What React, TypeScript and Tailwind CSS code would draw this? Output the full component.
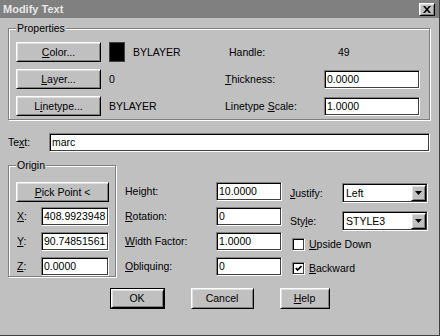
import type { ReactNode } from "react";

// win95 bevels
const raised =
  "border border-t-white border-l-white border-r-black border-b-black shadow-[inset_1px_1px_0_#dfdfdf,inset_-1px_-1px_0_#808080]";
const sunken =
  "border border-t-[#808080] border-l-[#808080] border-r-white border-b-white shadow-[inset_1px_1px_0_#000,inset_-1px_-1px_0_#404040]";

function U({ children }: { children: ReactNode }) {
  return <span className="underline">{children}</span>;
}

function Btn({
  children,
  className = "",
  primary = false,
}: {
  children: ReactNode;
  className?: string;
  primary?: boolean;
}) {
  const face = (
    <div className={`flex h-full w-full items-center justify-center bg-[#c0c0c0] ${raised}`}>
      {children}
    </div>
  );
  return <div className={`${primary ? "border border-black" : ""} ${className}`}>{face}</div>;
}

function Field({ value, className = "" }: { value: string; className?: string }) {
  return (
    <div className={`flex h-[19px] items-center bg-white pl-[2px] ${sunken} ${className}`}>{value}</div>
  );
}

function Combo({ value, className = "" }: { value: string; className?: string }) {
  return (
    <div className={`flex h-[20px] items-center bg-white ${sunken} ${className}`}>
      <span className="flex-1 pl-[3px]">{value}</span>
      <div className={`mr-[1px] flex h-[16px] w-[15px] items-center justify-center bg-[#c0c0c0] ${raised}`}>
        <svg width="7" height="4" viewBox="0 0 7 4">
          <path d="M0 0h7L3.5 4z" fill="#000" />
        </svg>
      </div>
    </div>
  );
}

function Check({ checked = false }: { checked?: boolean }) {
  return (
    <div className={`flex h-[13px] w-[13px] items-center justify-center bg-white ${sunken}`}>
      {checked && (
        <svg width="7" height="7" viewBox="0 0 7 7">
          <path d="M0.8 3 L2.6 5 L6.4 1" stroke="#000" strokeWidth="1.8" fill="none" />
        </svg>
      )}
    </div>
  );
}

function Group({ label, className = "", children }: { label: string; className?: string; children: ReactNode }) {
  return (
    <div className={`relative border border-[#808080] shadow-[1px_1px_0_#fff,inset_1px_1px_0_#fff] ${className}`}>
      <span className="absolute -top-[7px] left-[7px] bg-[#c0c0c0] px-[1px] leading-[13px]">{label}</span>
      {children}
    </div>
  );
}

export default function App() {
  return (
    <div className="flex h-[336px] w-[440px] flex-col border-r border-b border-r-[#404040] border-b-[#404040] bg-[#c0c0c0] font-['Liberation_Sans',Arial,sans-serif] text-[10.5px] leading-[13px] text-black">
      {/* Title bar */}
      <div className="flex h-[18px] items-center justify-between bg-[#808080] pl-[3px] pr-[4px]">
        <span className="text-[11px] font-bold text-[#e6e6e6]">Modify Text</span>
        <div className={`flex h-[13px] w-[16px] items-center justify-center bg-[#c0c0c0] ${raised}`}>
          <svg width="8" height="7" viewBox="0 0 8 7">
            <path d="M0 0h2l2 2.3L6 0h2L5 3.5 8 7H6L4 4.7 2 7H0l3-3.5z" fill="#000" />
          </svg>
        </div>
      </div>

      <div className="flex flex-1 flex-col px-[8px] pt-[10px]">
        {/* Properties */}
        <Group label="Properties" className="h-[92px] w-[422px] pl-[7px] pt-[13px]">
          <div className="flex flex-col gap-[7px]">
            <div className="flex h-[20px] items-center">
              <div className="flex w-[209px] items-center">
                <Btn className="h-[20px] w-[85px]">
                  <U>C</U>olor...
                </Btn>
                <div className="ml-[8px] h-[20px] w-[16px] border border-[#404040] bg-black" />
                <span className="ml-[8px]">BYLAYER</span>
              </div>
              <span className="w-[113px] pl-[4px]">Handle:</span>
              <span>49</span>
            </div>
            <div className="flex h-[20px] items-center">
              <div className="flex w-[209px] items-center">
                <Btn className="h-[20px] w-[85px]">
                  <U>L</U>ayer...
                </Btn>
                <span className="ml-[8px]">0</span>
              </div>
              <span className="w-[99px]">
                <U>T</U>hickness:
              </span>
              <Field value="0.0000" className="w-[96px]" />
            </div>
            <div className="flex h-[20px] items-center">
              <div className="flex w-[209px] items-center">
                <Btn className="h-[20px] w-[85px]">
                  L<U>i</U>netype...
                </Btn>
                <span className="ml-[8px]">BYLAYER</span>
              </div>
              <span className="w-[99px]">
                Linetype <U>S</U>cale:
              </span>
              <Field value="1.0000" className="w-[96px]" />
            </div>
          </div>
        </Group>

        {/* Text */}
        <div className="mt-[13px] flex h-[19px] items-center">
          <span className="w-[41px]">
            Te<U>x</U>t:
          </span>
          <Field value="marc" className="w-[381px]" />
        </div>

        <div className="mt-[13px] flex">
          {/* Origin */}
          <Group label="Origin" className="h-[112px] w-[108px] pl-[7px] pt-[16px]">
            <Btn className="h-[20px] w-[93px]">
              <U>P</U>ick Point &lt;
            </Btn>
            <div className="mt-[5px] flex flex-col gap-[6px]">
              {[
                ["X", "408.9923948"],
                ["Y", "90.74851561"],
                ["Z", "0.0000"],
              ].map(([k, v]) => (
                <div key={k} className="flex items-center">
                  <span className="w-[25px] pl-[1px]">
                    <U>{k}</U>:
                  </span>
                  <Field value={v} className="w-[68px]" />
                </div>
              ))}
            </div>
          </Group>

          {/* Sizes */}
          <div className="ml-[9px] mt-[17px] flex flex-col gap-[6px]">
            <div className="flex items-center">
              <span className="w-[91px]">Height:</span>
              <Field value="10.0000" className="w-[66px]" />
            </div>
            <div className="flex items-center">
              <span className="w-[91px]">
                <U>R</U>otation:
              </span>
              <Field value="0" className="w-[66px]" />
            </div>
            <div className="flex items-center">
              <span className="w-[91px]">
                <U>W</U>idth Factor:
              </span>
              <Field value="1.0000" className="w-[66px]" />
            </div>
            <div className="flex items-center">
              <span className="w-[91px]">
                <U>O</U>bliquing:
              </span>
              <Field value="0" className="w-[66px]" />
            </div>
          </div>

          {/* Justify / style */}
          <div className="ml-[8px] mt-[18px] flex flex-col">
            <div className="flex items-center">
              <span className="w-[52px]">
                <U>J</U>ustify:
              </span>
              <Combo value="Left" className="w-[86px]" />
            </div>
            <div className="mt-[8px] flex items-center">
              <span className="w-[52px]">
                Sty<U>l</U>e:
              </span>
              <Combo value="STYLE3" className="w-[86px]" />
            </div>
            <div className="ml-[2px] mt-[7px] flex items-center gap-[4px]">
              <Check />
              <span>
                <U>U</U>pside Down
              </span>
            </div>
            <div className="ml-[2px] mt-[11px] flex items-center gap-[4px]">
              <Check checked />
              <span>
                <U>B</U>ackward
              </span>
            </div>
          </div>
        </div>

        {/* Buttons */}
        <div className="mt-[11px] flex justify-center gap-[26px]">
          <Btn primary className="h-[21px] w-[55px]">
            OK
          </Btn>
          <Btn className="h-[21px] w-[63px]">Cancel</Btn>
          <Btn className="h-[21px] w-[50px]">
            <U>H</U>elp
          </Btn>
        </div>
      </div>
    </div>
  );
}
